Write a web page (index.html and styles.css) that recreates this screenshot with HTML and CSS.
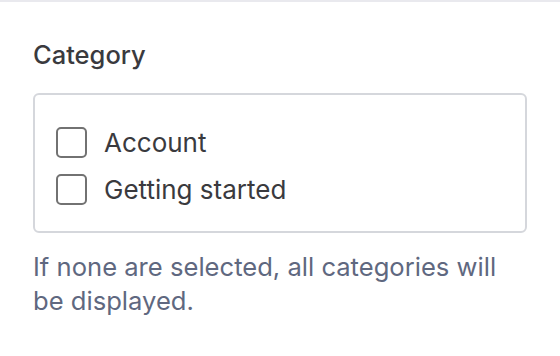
FILE: index.html
```html
<!DOCTYPE html>
<html>
<head>
<meta charset="utf-8">
<link rel="stylesheet" href="styles.css">
</head>
<body>
<div class="topbar"></div>
<div class="field">
  <div class="label">Category</div>
  <div class="options">
    <label class="option"><span class="box"></span><span class="text">Account</span></label>
    <label class="option"><span class="box"></span><span class="text">Getting started</span></label>
  </div>
  <p class="help">If none are selected, all categories will be displayed.</p>
</div>
</body>
</html>
```
FILE: styles.css
```css
html, body {
  margin: 0;
  padding: 0;
  background: #ffffff;
}
body {
  font-family: Inter, "Noto Sans", "Liberation Sans", sans-serif;
  width: 560px;
  height: 356px;
  overflow: hidden;
}
.topbar {
  height: 2px;
  background: #e9e9ee;
}
.field {
  padding: 37px 33px 0 33px;
}
.label {
  font-size: 25.5px;
  line-height: 32px;
  font-weight: 500;
  color: #3a3a3e;
  margin-bottom: 22px;
}
.options {
  box-sizing: border-box;
  height: 140px;
  border: 2px solid #d5d7dc;
  border-radius: 6px;
  padding: 24px 22px 18px 21px;
  display: flex;
  flex-direction: column;
}
.option {
  display: flex;
  align-items: center;
  height: 47px;
  gap: 17px;
}
.box {
  box-sizing: border-box;
  width: 31px;
  height: 31px;
  border: 2px solid #727272;
  border-radius: 5px;
  background: #fff;
}
.text {
  font-size: 26px;
  color: #3a3a3e;
}
.help {
  margin: 17px 0 0 0;
  font-size: 25.6px;
  line-height: 34px;
  color: #5f6880;
}
```
